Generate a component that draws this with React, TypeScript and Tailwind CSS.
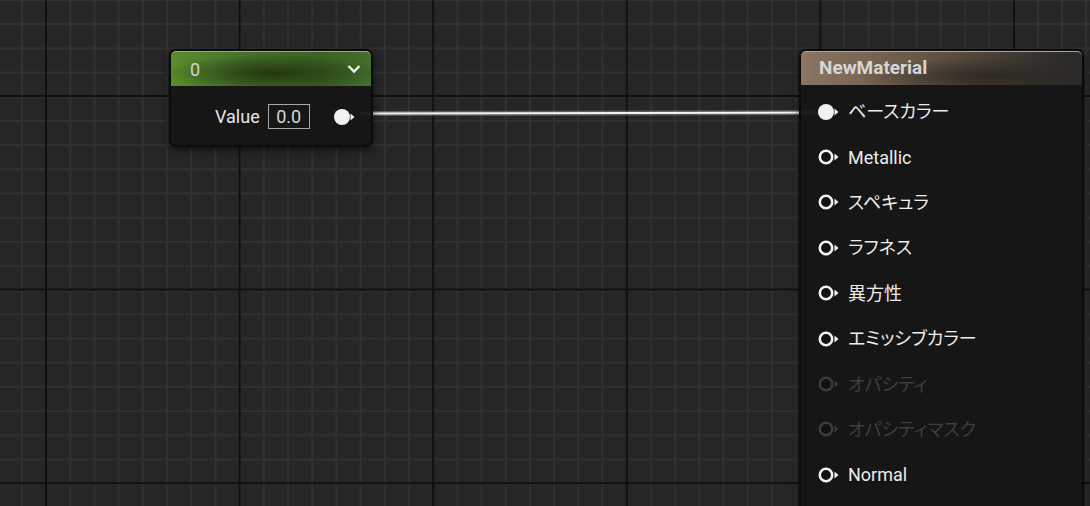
import type { ReactNode } from "react";

type PinKind = "filled" | "hollow" | "off";

function Pin({ kind }: { kind: PinKind }) {
  const c = kind === "off" ? "#3c3c3c" : "#f2f2f2";
  return (
    <svg width="24" height="18" viewBox="0 0 24 18" className="shrink-0">
      {kind === "filled" ? (
        <circle cx="8" cy="9" r="8" fill={c} />
      ) : (
        <circle cx="8" cy="9" r="6.2" fill="#111" stroke={c} strokeWidth="2.6" />
      )}
      <path d="M16.5 5.5 L20.5 9 L16.5 12.5 Z" fill={c} />
    </svg>
  );
}

const inputs: { label: string; kind: PinKind }[] = [
  { label: "ベースカラー", kind: "filled" },
  { label: "Metallic", kind: "hollow" },
  { label: "スペキュラ", kind: "hollow" },
  { label: "ラフネス", kind: "hollow" },
  { label: "異方性", kind: "hollow" },
  { label: "エミッシブカラー", kind: "hollow" },
  { label: "オパシティ", kind: "off" },
  { label: "オパシティマスク", kind: "off" },
  { label: "Normal", kind: "hollow" },
];

function Node({ className, header, children }: { className: string; header: ReactNode; children: ReactNode }) {
  return (
    <div className={`absolute rounded-[7px] border-2 border-[#0b0b0b] bg-[#151515]/95 shadow-[0_3px_8px_rgba(0,0,0,0.6)] ${className}`}>
      {header}
      {children}
    </div>
  );
}

export default function App() {
  return (
    <div
      className="relative h-[506px] w-[1090px] overflow-hidden bg-[#262626] font-['Roboto','Noto_Sans_CJK_JP',sans-serif] [background-image:linear-gradient(to_right,#0f0f0f_2px,transparent_2px),linear-gradient(to_bottom,#0f0f0f_2px,transparent_2px),linear-gradient(to_right,#313131_2px,transparent_2px),linear-gradient(to_bottom,#313131_2px,transparent_2px)] [background-size:193.6px_193.6px,193.6px_193.6px,24.2px_24.2px,24.2px_24.2px] [background-position:45px_95px,45px_95px,21px_-1px,21px_-1px]"
    >
      {/* wire */}
      <svg className="absolute left-0 top-0" width="1090" height="506">
        <line x1="360" y1="113.5" x2="822" y2="112.5" stroke="#ffffff" strokeOpacity="0.25" strokeWidth="5" />
        <line x1="360" y1="113.5" x2="822" y2="112.5" stroke="#f4f4f4" strokeWidth="2" />
      </svg>

      {/* constant node */}
      <Node
        className="left-[169px] top-[49px] h-[98px] w-[204px]"
        header={
          <div className="flex h-[35px] items-center justify-between rounded-t-[5px] border-t border-[#8fb860] bg-[radial-gradient(ellipse_55%_55%_at_52%_62%,#22360f_0%,transparent_100%),linear-gradient(to_right,#5b8c2c,#43702a_40%,#3a6424_75%,#466e2c)] pl-[19px] pr-[9px] text-[18px] text-[#d4d4d4]">
            <span>0</span>
            <svg width="16" height="12" viewBox="0 0 16 12">
              <path d="M2.5 3 L8 8.5 L13.5 3" fill="none" stroke="#f0f0f0" strokeWidth="2.4" />
            </svg>
          </div>
        }
      >
        <div className="flex items-center pl-[44px] pt-[17px] text-[18px] text-[#e6e6e6]">
          <span>Value</span>
          <span className="ml-[8px] flex h-[25px] w-[42px] items-center justify-center border-[1.5px] border-[#a8a8a8] text-[#d8d8d8]">0.0</span>
          <span className="ml-[24px]">
            <Pin kind="filled" />
          </span>
        </div>
      </Node>

      {/* material node */}
      <Node
        className="left-[799px] top-[49px] h-[480px] w-[285px]"
        header={
          <div className="flex h-[34px] items-center rounded-t-[5px] border-t border-[#b7a58f] bg-[radial-gradient(ellipse_50%_60%_at_70%_75%,#2c2824_0%,transparent_100%),linear-gradient(to_right,#8a7662,#6f5d4b_35%,#4d4339_65%,#302d2a_90%,#2b2a29)] pl-[18px] text-[19px] font-bold text-[#d6d6d6]">
            NewMaterial
          </div>
        }
      >
        <div className="flex flex-col pt-[4px]">
          {inputs.map((p) => (
            <div key={p.label} className="flex h-[45.4px] items-center gap-[6px] pl-[17px] text-[18px] [font-feature-settings:'palt']">
              <Pin kind={p.kind} />
              <span className={p.kind === "off" ? "text-[#3e3e3e]" : "text-[#ececec]"}>{p.label}</span>
            </div>
          ))}
        </div>
      </Node>
    </div>
  );
}
